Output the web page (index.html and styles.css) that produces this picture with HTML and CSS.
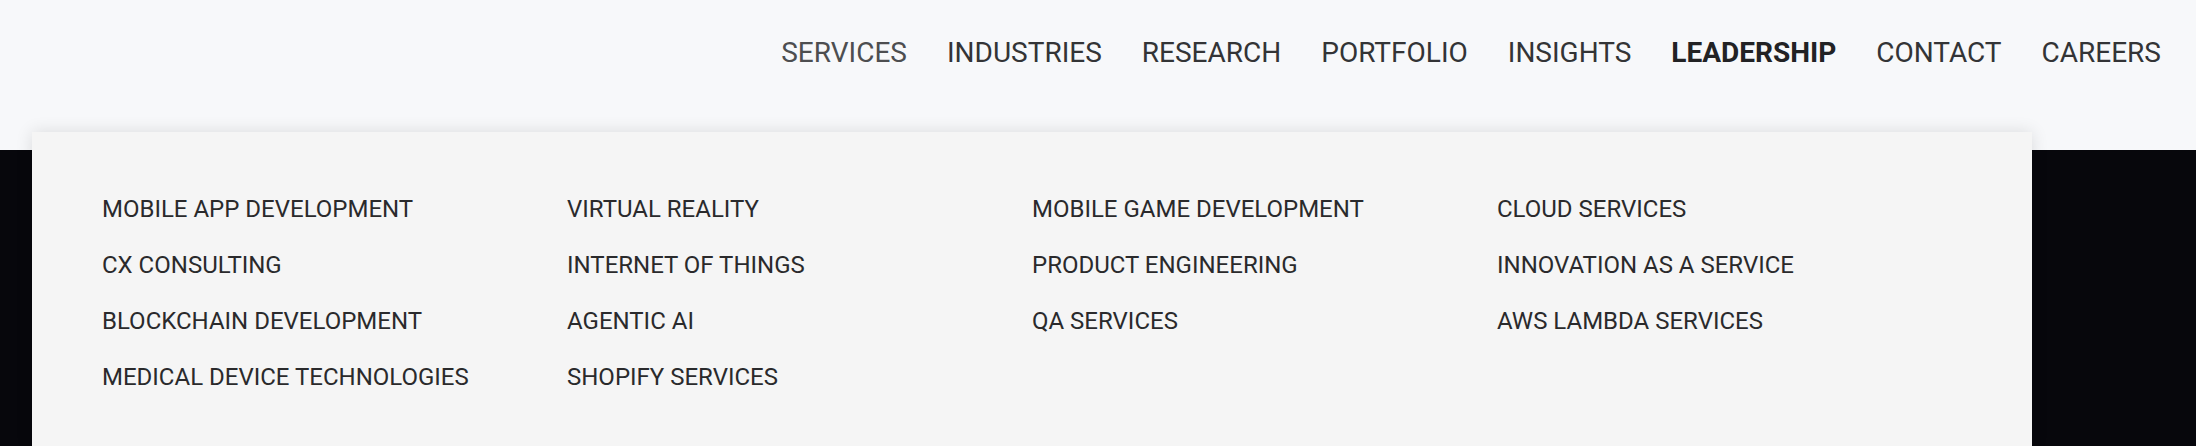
FILE: index.html
```html
<!DOCTYPE html>
<html lang="en">
<head>
<meta charset="utf-8">
<title>Menu</title>
<link rel="stylesheet" href="styles.css">
</head>
<body>
<header class="site-header">
  <nav class="main-nav">
    <a class="nav-link nav-link--current" href="#">SERVICES</a>
    <a class="nav-link" href="#">INDUSTRIES</a>
    <a class="nav-link" href="#">RESEARCH</a>
    <a class="nav-link" href="#">PORTFOLIO</a>
    <a class="nav-link" href="#">INSIGHTS</a>
    <a class="nav-link nav-link--bold" href="#">LEADERSHIP</a>
    <a class="nav-link" href="#">CONTACT</a>
    <a class="nav-link" href="#">CAREERS</a>
  </nav>
</header>
<main class="hero"></main>
<div class="mega-menu">
  <ul class="mega-col">
    <li><a href="#">MOBILE APP DEVELOPMENT</a></li>
    <li><a href="#">CX CONSULTING</a></li>
    <li><a href="#">BLOCKCHAIN DEVELOPMENT</a></li>
    <li><a href="#">MEDICAL DEVICE TECHNOLOGIES</a></li>
  </ul>
  <ul class="mega-col">
    <li><a href="#">VIRTUAL REALITY</a></li>
    <li><a href="#">INTERNET OF THINGS</a></li>
    <li><a href="#">AGENTIC AI</a></li>
    <li><a href="#">SHOPIFY SERVICES</a></li>
  </ul>
  <ul class="mega-col">
    <li><a href="#">MOBILE GAME DEVELOPMENT</a></li>
    <li><a href="#">PRODUCT ENGINEERING</a></li>
    <li><a href="#">QA SERVICES</a></li>
  </ul>
  <ul class="mega-col">
    <li><a href="#">CLOUD SERVICES</a></li>
    <li><a href="#">INNOVATION AS A SERVICE</a></li>
    <li><a href="#">AWS LAMBDA SERVICES</a></li>
  </ul>
</div>
</body>
</html>
```
FILE: styles.css
```css
html, body {
  margin: 0;
  padding: 0;
}
body {
  font-family: Roboto, "Liberation Sans", sans-serif;
  background: #07070c;
  height: 446px;
  overflow: hidden;
  position: relative;
}
.site-header {
  height: 150px;
  background: #f7f8fa;
  box-sizing: border-box;
  padding: 37px 35px 0 0;
}
.main-nav {
  display: flex;
  justify-content: flex-end;
  gap: 40px;
}
.nav-link {
  font-size: 28px;
  line-height: 32px;
  color: #333436;
  text-decoration: none;
}
.nav-link--current {
  color: #4d4e50;
}
.nav-link--bold {
  font-weight: 700;
  color: #222224;
}
.hero {
  height: 296px;
  background: #07070c;
}
.mega-menu {
  position: absolute;
  top: 132px;
  left: 32px;
  bottom: 0;
  width: 2000px;
  box-sizing: border-box;
  padding: 61px 70px 0;
  background: #f5f5f5;
  box-shadow: 0 0 16px rgba(0, 0, 0, 0.12);
  display: grid;
  grid-template-columns: repeat(4, 1fr);
  align-content: start;
}
.mega-col {
  list-style: none;
  margin: 0;
  padding: 0;
  display: flex;
  flex-direction: column;
  gap: 24px;
}
.mega-col a {
  font-size: 24px;
  line-height: 32px;
  color: #2a2a2c;
  text-decoration: none;
  display: block;
}
```
